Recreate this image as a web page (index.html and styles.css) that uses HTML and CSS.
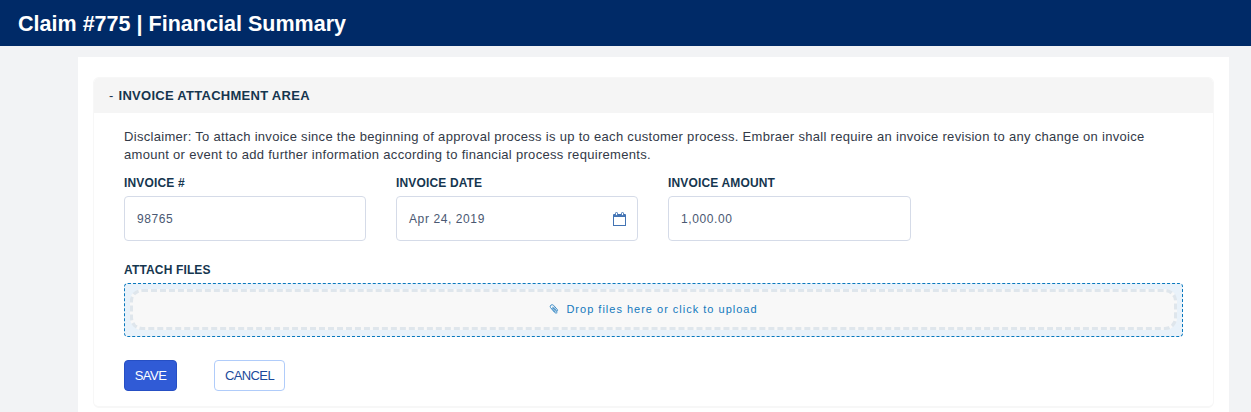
FILE: index.html
```html
<!DOCTYPE html>
<html lang="en">
<head>
<meta charset="utf-8">
<title>Claim #775 | Financial Summary</title>
<link rel="stylesheet" href="styles.css">
</head>
<body>
<header class="topbar"><h1 class="topbar-title">Claim #775 | Financial Summary</h1></header>
<main class="page">
  <section class="panel">
    <h2 class="panel-head"><span class="dash">-</span> INVOICE ATTACHMENT AREA</h2>
    <form class="panel-body">
      <p class="disclaimer">Disclaimer: To attach invoice since the beginning of approval process is up to each customer process. Embraer shall require an invoice revision to any change on invoice<br>amount or event to add further information according to financial process requirements.</p>
      <div class="fields">
        <div class="field"><span class="label">INVOICE #</span><div class="input">98765</div></div>
        <div class="field"><span class="label">INVOICE DATE</span><div class="input">Apr 24, 2019
          <svg class="calendar" width="13" height="14" viewBox="0 0 13 14"><path d="M0 3Q0 2 1 2H12Q13 2 13 3V14H0ZM1 5V13H12V5Z" fill="#4374b4" fill-rule="evenodd"/><rect x="2.5" y=".5" width="2" height="3" rx=".8" fill="#fff" stroke="#4374b4"/><rect x="8.5" y=".5" width="2" height="3" rx=".8" fill="#fff" stroke="#4374b4"/></svg></div></div>
        <div class="field"><span class="label">INVOICE AMOUNT</span><div class="input">1,000.00</div></div>
      </div>
      <div class="attach">
        <span class="label attach-label">ATTACH FILES</span>
        <div class="drop-outer"><div class="drop-inner">
          <svg class="clip" width="10" height="10" viewBox="0 0 10 11" fill="none" stroke="#3286c4" stroke-width="1"><path d="M3.4 3.6 7 8Q7.8 8.8 8.5 8.1T8.7 6.2L4.6 1.5Q3 .1 1.6 1.2T1.2 4L5.4 9Q7 10.7 8.7 9.6M2.5 4.4 6.4 9M4.1 3 8 7.4"/></svg>
          <span>Drop files here or click to upload</span>
        </div></div>
      </div>
      <div class="actions"><button type="button" class="btn save">SAVE</button><button type="button" class="btn cancel">CANCEL</button></div>
    </form>
  </section>
</main>
</body>
</html>
```
FILE: styles.css
```css
* { box-sizing: border-box; }
html { overflow: hidden; }
body { margin: 0; height: 412px; overflow: hidden; background: #f2f3f5; font-family: "Liberation Sans", Arial, sans-serif; }
.topbar { height: 46px; background: #002a67; padding: 12px 17px 0; }
.topbar-title { margin: 0 0 0 1px; font-size: 21.5px; line-height: 25px; font-weight: 700; letter-spacing: .02px; color: #fff; white-space: nowrap; }
.page { margin: 11px 22px 0 78px; height: 355px; background: #fff; padding: 20px 15px 0; }
.panel { height: 331px; border: 1px solid #f7f7f7; border-bottom-width: 2px; border-radius: 6px; overflow: hidden; }
.panel-head { margin: 0; height: 35px; background: #f5f5f5; padding: 0 15px; font-size: 13px; line-height: 36px; font-weight: 700; letter-spacing: .28px; color: #15364f; white-space: nowrap; }
.dash { font-weight: 400; margin-right: 1px; }
.panel-body { padding: 15px 30px 0; }
.disclaimer { margin: 0; font-size: 13px; line-height: 18px; letter-spacing: .3px; color: #333a48; white-space: nowrap; }
.fields { display: grid; grid-template-columns: 242px 242px 243px; gap: 30px; margin-top: 12px; }
.label { display: block; font-size: 12px; line-height: 14px; font-weight: 700; letter-spacing: .15px; color: #15364f; }
.input { display: flex; align-items: center; justify-content: space-between; height: 45px; margin-top: 6px; padding: 0 11px 0 12px; border: 1px solid #d5dbe8; border-radius: 4px; font-size: 12px; letter-spacing: .6px; color: #4a5872; }
.attach { margin-top: 22px; }
.attach-label { letter-spacing: .15px; }
.drop-outer { margin-top: 6px; height: 54px; width: 1059px; padding: 5px; border: 1px dashed #0878be; border-radius: 4px; background: #e9f2fa; }
.drop-inner { height: 41px; display: flex; align-items: center; justify-content: center; gap: 7px; padding-bottom: 1px; border: 3px dashed #dfe6ec; border-radius: 12px; background: #f8f8f8; font-size: 11px; letter-spacing: 1px; color: #1478bd; }
.actions { display: flex; gap: 37px; margin-top: 23px; }
.btn { height: 31px; padding: 0; border-radius: 4px; font: 13px "Liberation Sans", Arial, sans-serif; }
.save { width: 53px; background: #305bd6; border: 1px solid #264fc4; color: #fff; letter-spacing: -.5px; }
.cancel { width: 71px; background: #fff; border: 1px solid #b0ccfa; color: #1c4a9b; letter-spacing: -.6px; }
```
